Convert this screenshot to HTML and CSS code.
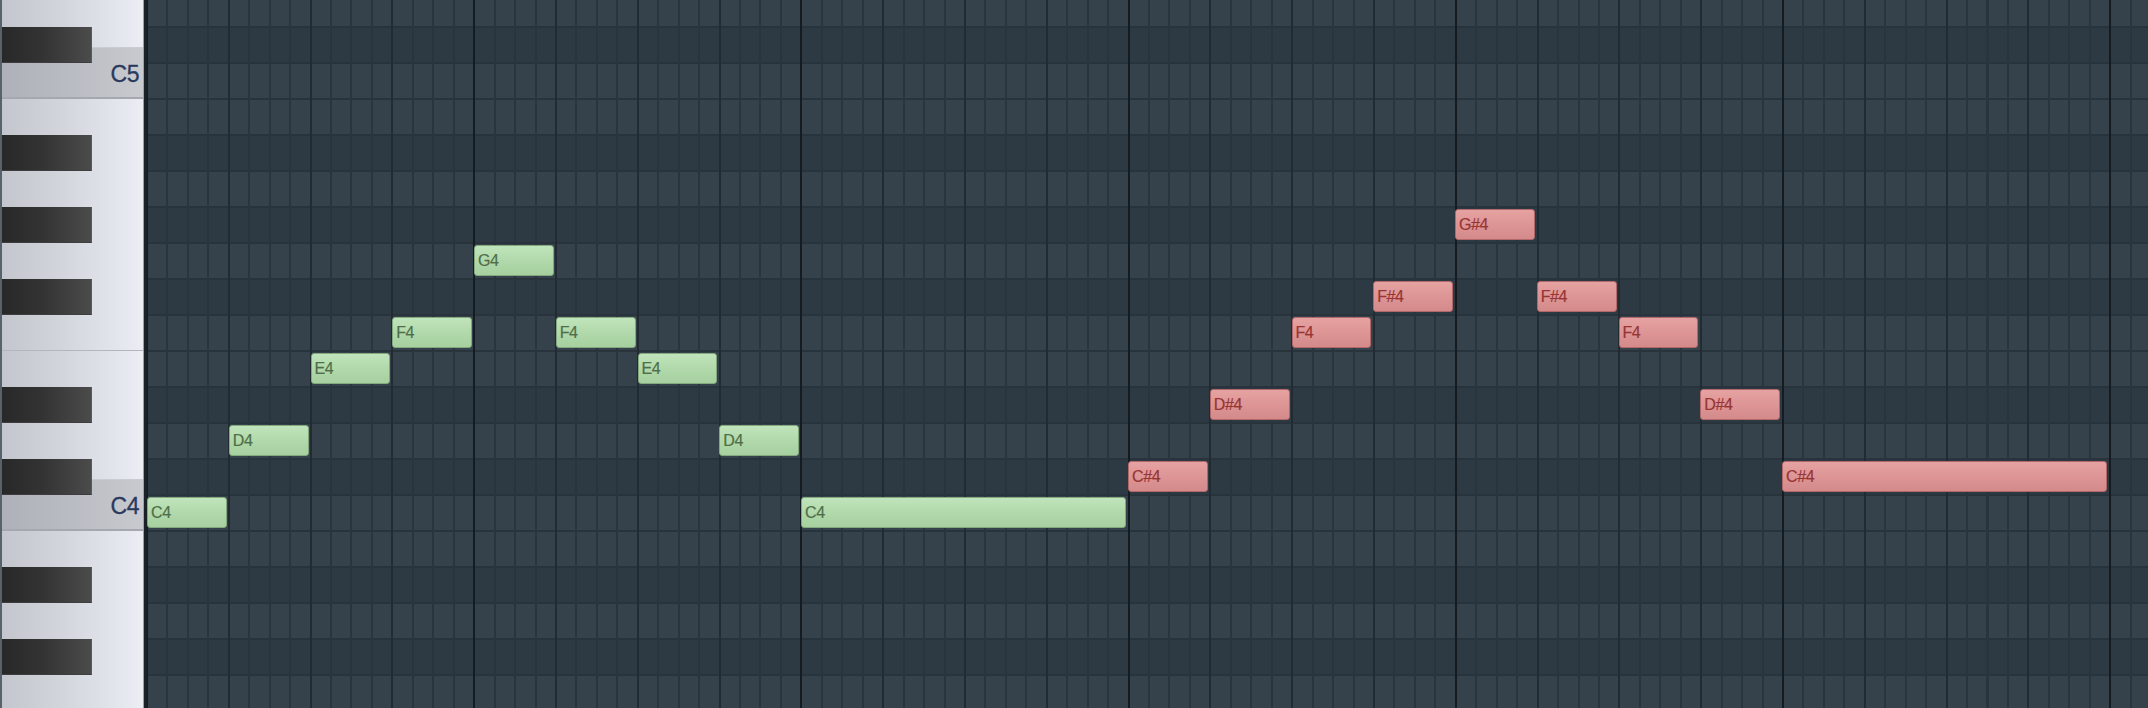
FILE: index.html
```html
<!DOCTYPE html>
<html>
<head>
<meta charset="utf-8">
<link rel="stylesheet" href="styles.css">
</head>
<body>
<div class="roll">
  <div class="keys">
    <div class="key"></div>
    <div class="key"><div class="black"></div></div>
    <div class="key c-key"><div class="c-band"><span class="c-label">C5</span></div></div>
    <div class="key"></div>
    <div class="key"><div class="black"></div></div>
    <div class="key"></div>
    <div class="key"><div class="black"></div></div>
    <div class="key"></div>
    <div class="key"><div class="black"></div></div>
    <div class="key f-key"></div>
    <div class="key"></div>
    <div class="key"><div class="black"></div></div>
    <div class="key"></div>
    <div class="key"><div class="black"></div></div>
    <div class="key c-key"><div class="c-band"><span class="c-label">C4</span></div></div>
    <div class="key"></div>
    <div class="key"><div class="black"></div></div>
    <div class="key"></div>
    <div class="key"><div class="black"></div></div>
    <div class="key"></div>
  </div>
  <div class="grid">
    <div class="lane r1"></div>
    <div class="lane dark r2"></div>
    <div class="lane r3"></div>
    <div class="lane r4"></div>
    <div class="lane dark r5"></div>
    <div class="lane r6"></div>
    <div class="lane dark r7"></div>
    <div class="lane r8"></div>
    <div class="lane dark r9"></div>
    <div class="lane r10"></div>
    <div class="lane r11"></div>
    <div class="lane dark r12"></div>
    <div class="lane r13"></div>
    <div class="lane dark r14"></div>
    <div class="lane r15"></div>
    <div class="lane r16"></div>
    <div class="lane dark r17"></div>
    <div class="lane r18"></div>
    <div class="lane dark r19"></div>
    <div class="lane r20"></div>

    <div class="note green r15" style="grid-column: 1 / span 4">C4</div>
    <div class="note green r13" style="grid-column: 5 / span 4">D4</div>
    <div class="note green r11" style="grid-column: 9 / span 4">E4</div>
    <div class="note green r10" style="grid-column: 13 / span 4">F4</div>
    <div class="note green r8" style="grid-column: 17 / span 4">G4</div>
    <div class="note green r10" style="grid-column: 21 / span 4">F4</div>
    <div class="note green r11" style="grid-column: 25 / span 4">E4</div>
    <div class="note green r13" style="grid-column: 29 / span 4">D4</div>
    <div class="note green r15" style="grid-column: 33 / span 16">C4</div>

    <div class="note red r14" style="grid-column: 49 / span 4">C#4</div>
    <div class="note red r12" style="grid-column: 53 / span 4">D#4</div>
    <div class="note red r10" style="grid-column: 57 / span 4">F4</div>
    <div class="note red r9" style="grid-column: 61 / span 4">F#4</div>
    <div class="note red r7" style="grid-column: 65 / span 4">G#4</div>
    <div class="note red r9" style="grid-column: 69 / span 4">F#4</div>
    <div class="note red r10" style="grid-column: 73 / span 4">F4</div>
    <div class="note red r12" style="grid-column: 77 / span 4">D#4</div>
    <div class="note red r14" style="grid-column: 81 / span 16">C#4</div>
  </div>
</div>
</body>
</html>
```

FILE: styles.css
```css
html, body {
  margin: 0;
  padding: 0;
  height: 708px;
  overflow: hidden;
  background: #2e3a43;
}

.roll {
  display: flex;
  margin-top: -9px;
  height: 720px;
}

/* ---------- keyboard ---------- */
.keys {
  flex: none;
  width: 141px;
  display: flex;
  flex-direction: column;
  border-left: 2px solid #59616a;
  border-right: 1px solid #9da1a8;
  box-shadow: 3px 0 0 #1a2228;
  margin-right: 3px;
  background: linear-gradient(90deg, #c3c6cd 0%, #d3d6dd 45%, #e6e9f0 90%, #eceef3 100%);
}

.key {
  flex: none;
  height: 36px;
  box-sizing: border-box;
  display: flex;
  flex-direction: column;
}

.black {
  position: relative;
  z-index: 2;
  width: 90px;
  height: 36px;
  box-sizing: border-box;
  background: linear-gradient(90deg, #282828 0%, #333333 45%, #4b4b4b 100%);
  border-right: 1px solid #5a5a5a;
  border-bottom: 1px solid #3d3d3d;
}

.c-band {
  flex: none;
  margin-top: -16px;
  height: 52px;
  box-sizing: border-box;
  display: flex;
  align-items: center;
  justify-content: flex-end;
  padding: 4px 4px 0 0;
  background: linear-gradient(90deg, #aeb1b7 0%, #b9bcc2 50%, #c8cacf 100%);
  border-top: 1px solid #c9ccd2;
  border-bottom: 2px solid #a5a8ae;
}

.c-label {
  font-family: "Liberation Sans", Arial, sans-serif;
  font-size: 23px;
  color: #2a3a5c;
  letter-spacing: -0.5px;
  line-height: 1;
  -webkit-text-stroke: 0.3px #2a3a5c;
}

.f-key {
  border-bottom: 1px solid #b3b6bc;
}

/* ---------- grid ---------- */
.grid {
  flex: 1;
  display: grid;
  grid-template-columns: repeat(98, 20.45px);
  grid-template-rows: repeat(20, 36px);
  overflow: hidden;
}

.lane {
  grid-column: 1 / -1;
  background-color: #35424c;
  background-image:
    repeating-linear-gradient(90deg,
      #151c21 0 1px, transparent 1px 19.45px,
      #2a343c 19.45px 21.45px, transparent 21.45px 39.9px,
      #2a343c 39.9px 41.9px, transparent 41.9px 60.35px,
      #2a343c 60.35px 62.35px, transparent 62.35px 80.8px,
      #222b32 80.8px 82.8px, transparent 82.8px 101.25px,
      #2a343c 101.25px 103.25px, transparent 103.25px 121.7px,
      #2a343c 121.7px 123.7px, transparent 123.7px 142.15px,
      #2a343c 142.15px 144.15px, transparent 144.15px 162.6px,
      #222b32 162.6px 164.6px, transparent 164.6px 183.05px,
      #2a343c 183.05px 185.05px, transparent 185.05px 203.5px,
      #2a343c 203.5px 205.5px, transparent 205.5px 223.95px,
      #2a343c 223.95px 225.95px, transparent 225.95px 244.4px,
      #222b32 244.4px 246.4px, transparent 246.4px 264.85px,
      #2a343c 264.85px 266.85px, transparent 266.85px 285.3px,
      #2a343c 285.3px 287.3px, transparent 287.3px 305.75px,
      #2a343c 305.75px 307.75px, transparent 307.75px 326.2px,
      #151c21 326.2px 327.2px),
    linear-gradient(180deg, #29333b 0 2px, transparent 2px);
  background-position: 0 0, 0 -1px;
}

.lane.dark {
  background-color: #2e3a43;
}

.r1 { grid-row: 1; }
.r2 { grid-row: 2; }
.r3 { grid-row: 3; }
.r4 { grid-row: 4; }
.r5 { grid-row: 5; }
.r6 { grid-row: 6; }
.r7 { grid-row: 7; }
.r8 { grid-row: 8; }
.r9 { grid-row: 9; }
.r10 { grid-row: 10; }
.r11 { grid-row: 11; }
.r12 { grid-row: 12; }
.r13 { grid-row: 13; }
.r14 { grid-row: 14; }
.r15 { grid-row: 15; }
.r16 { grid-row: 16; }
.r17 { grid-row: 17; }
.r18 { grid-row: 18; }
.r19 { grid-row: 19; }
.r20 { grid-row: 20; }

.note {
  margin: 2px 2px 3px 0;
  box-sizing: border-box;
  border-radius: 3px;
  display: flex;
  align-items: center;
  padding: 1px 0 0 3px;
  font-family: "Liberation Sans", Arial, sans-serif;
  font-size: 16px;
  letter-spacing: -0.4px;
  white-space: nowrap;
  overflow: hidden;
}

.note.green {
  background: linear-gradient(180deg, #c0e4bb 0%, #b1d9ab 50%, #a6d0a0 100%);
  border: 1px solid #84a87e;
  color: #4e6e48;
  -webkit-text-stroke: 0.2px #4e6e48;
}

.note.red {
  background: linear-gradient(180deg, #e6a2a2 0%, #dd9595 50%, #d48a8a 100%);
  border: 1px solid #b26868;
  color: #983434;
  -webkit-text-stroke: 0.2px #983434;
}
```
